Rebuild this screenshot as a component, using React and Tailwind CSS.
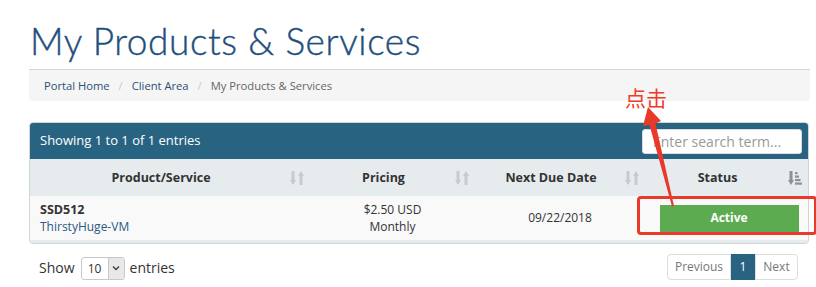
import React from "react";

function SortIcon({ active }) {
    const c = active ? "#8d9296" : "#c6cbce";
    if (active) {
        return (
            <svg width="14" height="16" viewBox="0 0 14 16">
                <rect x="1.5" y="1" width="3" height="10" fill={c} />
                <polygon points="0,10 6,10 3,15" fill={c} />
                <rect x="7" y="2" width="2.5" height="2.2" fill={c} />
                <rect x="7" y="5.5" width="4" height="2.2" fill={c} />
                <rect x="7" y="9" width="5.5" height="2.2" fill={c} />
                <rect x="7" y="12.5" width="7" height="2.2" fill={c} />
            </svg>
        );
    }
    return (
        <svg width="14" height="16" viewBox="0 0 14 16">
            <rect x="1.5" y="1" width="3" height="10" fill={c} />
            <polygon points="0,10 6,10 3,15" fill={c} />
            <rect x="9.5" y="5" width="3" height="10" fill={c} />
            <polygon points="8,6 14,6 11,1" fill={c} />
        </svg>
    );
}

function HeadCell({ label, active }) {
    return (
        <div className="relative flex items-center justify-center pt-[2px] pl-2 pr-[26px] font-bold text-[12.5px] text-[#333]">
            {label}
            <span className="absolute right-[6px] top-[11px]">
                <SortIcon active={active} />
            </span>
        </div>
    );
}

export default function App() {
    return (
        <div className="relative w-[816px] h-[287px] overflow-hidden bg-white font-['Open_Sans',sans-serif] text-[#333]">
            <div className="pl-[29px] pr-[6px]">
                <h1 className="pt-[20px] pl-[1px] text-[37px] leading-[42px] font-['Lato',sans-serif] font-light text-[#1f4f7d] tracking-[0.6px] [-webkit-text-stroke:0.4px_#1f4f7d]">
                    My Products &amp; Services
                </h1>

                <div className="mt-[7px] h-[32px] flex items-center pt-[1px] pl-[15px] bg-[#f5f5f5] border-t border-[#d4d4d4] rounded-b-[4px] text-[11.2px]">
                    <span className="text-[#2a4f74]">Portal Home</span>
                    <span className="px-[9px] text-[#c8c8c8]">/</span>
                    <span className="text-[#2a4f74]">Client Area</span>
                    <span className="px-[9px] text-[#c8c8c8]">/</span>
                    <span className="text-[#666]">My Products &amp; Services</span>
                </div>

                <div className="mt-[21px] w-[780px] border border-[#cfd4d7] rounded-[4px] overflow-hidden">
                    <div className="h-[36px] bg-[#286481] flex items-center justify-between pl-[10px] pr-[6px]">
                        <span className="text-white text-[13px]">Showing 1 to 1 of 1 entries</span>
                        <div className="w-[160px] h-[25px] bg-white rounded-[3px] border border-[#dcdcdc] flex items-center pl-[10px] text-[14px] text-[#999]">
                            Enter search term...
                        </div>
                    </div>

                    <div className="grid grid-cols-[280px_165px_170px_1fr] h-[37px] bg-[#e6ebee]">
                        <HeadCell label="Product/Service" />
                        <HeadCell label="Pricing" />
                        <HeadCell label="Next Due Date" />
                        <HeadCell label="Status" active />
                    </div>

                    <div className="grid grid-cols-[280px_165px_170px_1fr] h-[44px] bg-[#f9f9f9] text-[12px]">
                        <div className="pl-[10px] flex flex-col justify-center leading-[17px]">
                            <span className="font-bold text-[12.5px] text-[#333]">SSD512</span>
                            <span className="text-[#2a5a85]">ThirstyHuge-VM</span>
                        </div>
                        <div className="flex flex-col items-center justify-center leading-[17px] text-[#333]">
                            <span>$2.50 USD</span>
                            <span>Monthly</span>
                        </div>
                        <div className="flex items-center justify-center text-[#333]">09/22/2018</div>
                        <div className="flex items-center justify-center pl-[5px]">
                            <div className="w-[139px] h-[27px] bg-[#5dab51] text-white font-bold text-[12px] flex items-center justify-center">
                                Active
                            </div>
                        </div>
                    </div>
                    <div className="h-[3px] bg-[#e6ebee]" />
                </div>

                <div className="mt-[10px] w-[780px] flex items-center justify-between text-[14px]">
                    <div className="flex items-center pl-[10px] text-[#333]">
                        <span>Show</span>
                        <div className="ml-[6px] mr-[5px] w-[44px] h-[23px] mt-[2px] border border-[#c8c8c8] rounded-[3px] flex bg-white">
                            <span className="flex-1 flex items-center justify-center text-[12px] pt-[2px]">10</span>
                            <span className="w-[16px] bg-[#e8e8e8] border-l border-[#c8c8c8] flex items-center justify-center">
                                <svg width="8" height="6" viewBox="0 0 8 6">
                                    <polyline points="1,1.5 4,4.5 7,1.5" fill="none" stroke="#444" strokeWidth="1.5" />
                                </svg>
                            </span>
                        </div>
                        <span>entries</span>
                    </div>
                    <div className="mr-[11px] flex h-[26px] text-[12px]">
                        <span className="w-[64px] flex items-center justify-center border border-[#ddd] rounded-l-[4px] text-[#777]">Previous</span>
                        <span className="w-[24px] flex items-center justify-center bg-[#286481] text-white">1</span>
                        <span className="w-[43px] flex items-center justify-center border border-[#ddd] rounded-r-[4px] text-[#777]">Next</span>
                    </div>
                </div>
            </div>

            <div className="absolute left-[625px] top-[84px] text-[21px] leading-[26px] text-[#ee3b2c] font-['Noto_Sans_CJK_SC',sans-serif]">
                点击
            </div>
            <div className="absolute left-[637px] top-[196px] w-[180px] h-[39px] border-[3px] border-[#e8392b] rounded-[4px]" />
            <svg className="absolute left-0 top-0" width="816" height="287">
                <polygon
                    points="648,107 661,121 655.5,123.5 674,206 672,206.5 649.5,125 643,126"
                    fill="#e8392b"
                />
            </svg>
        </div>
    );
}
